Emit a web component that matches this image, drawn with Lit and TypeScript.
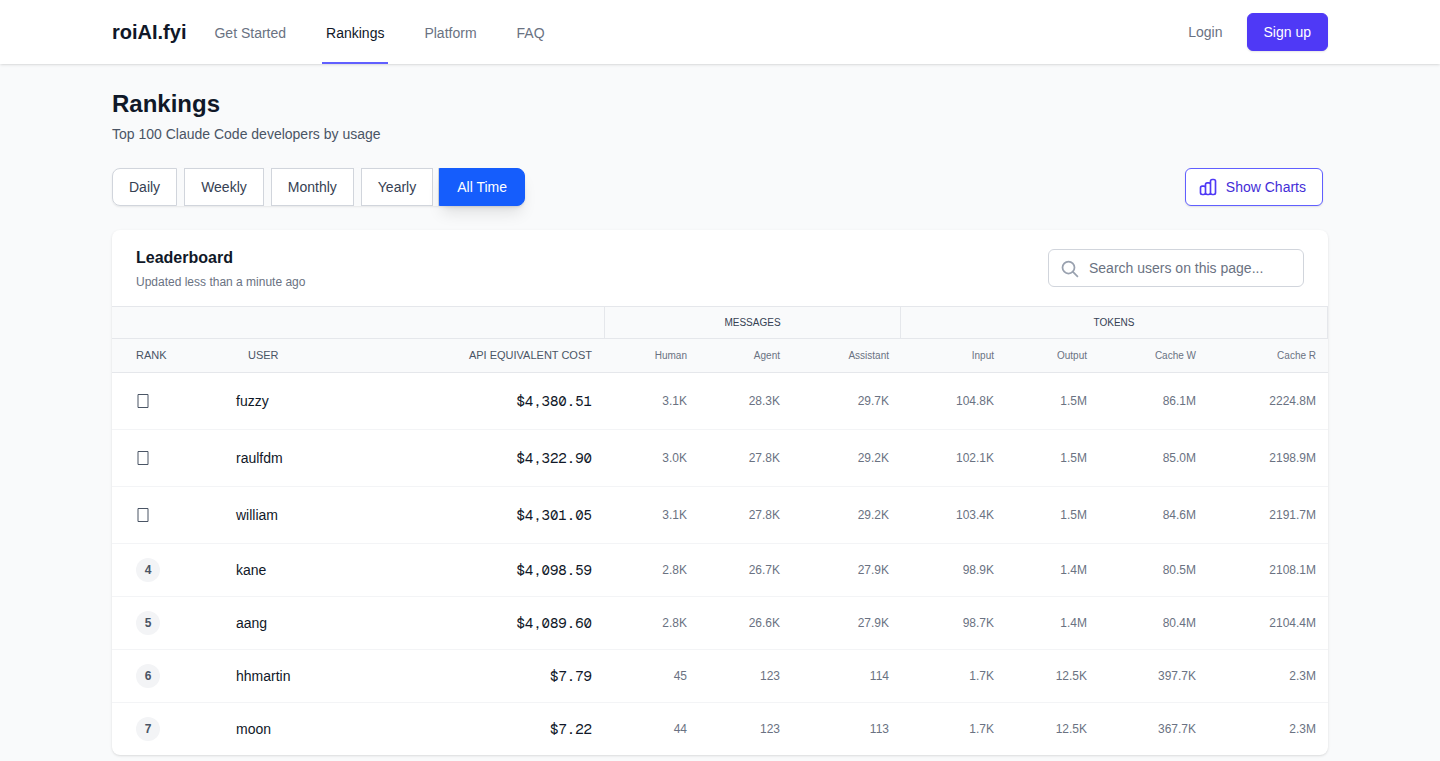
import { LitElement, html, css } from "lit";
import { customElement, state } from "lit/decorators.js";
import { classMap } from "lit/directives/class-map.js";

interface Entry {
  rank: number;
  user: string;
  cost: string;
  usage: string[];
}

const ENTRIES: Entry[] = [
  { rank: 1, user: "fuzzy", cost: "$4,380.51", usage: ["3.1K", "28.3K", "29.7K", "104.8K", "1.5M", "86.1M", "2224.8M"] },
  { rank: 2, user: "raulfdm", cost: "$4,322.90", usage: ["3.0K", "27.8K", "29.2K", "102.1K", "1.5M", "85.0M", "2198.9M"] },
  { rank: 3, user: "william", cost: "$4,301.05", usage: ["3.1K", "27.8K", "29.2K", "103.4K", "1.5M", "84.6M", "2191.7M"] },
  { rank: 4, user: "kane", cost: "$4,098.59", usage: ["2.8K", "26.7K", "27.9K", "98.9K", "1.4M", "80.5M", "2108.1M"] },
  { rank: 5, user: "aang", cost: "$4,089.60", usage: ["2.8K", "26.6K", "27.9K", "98.7K", "1.4M", "80.4M", "2104.4M"] },
  { rank: 6, user: "hhmartin", cost: "$7.79", usage: ["45", "123", "114", "1.7K", "12.5K", "397.7K", "2.3M"] },
  { rank: 7, user: "moon", cost: "$7.22", usage: ["44", "123", "113", "1.7K", "12.5K", "367.7K", "2.3M"] },
];

const PODIUM_SIZE = 3;
const PERIODS = ["Daily", "Weekly", "Monthly", "Yearly", "All Time"];
const USAGE_COLUMNS = ["Human", "Agent", "Assistant", "Input", "Output", "Cache W", "Cache R"];

@customElement("site-header")
export class SiteHeader extends LitElement {
  static styles = css`
    :host {
      display: block;
      background: #fff;
      box-shadow: 0 1px 3px rgba(0, 0, 0, 0.1), 0 1px 2px -1px rgba(0, 0, 0, 0.1);
    }
    .bar {
      box-sizing: border-box;
      max-width: 1280px;
      height: 64px;
      margin: 0 auto;
      padding: 0 32px;
      display: flex;
      align-items: center;
      justify-content: space-between;
    }
    a {
      text-decoration: none;
      color: #6a7282;
      font-size: 14px;
      line-height: 20px;
      font-weight: 500;
    }
    .left,
    nav {
      display: flex;
      align-items: center;
      height: 100%;
    }
    .left {
      gap: 24px;
    }
    nav {
      gap: 32px;
    }
    .brand {
      font-size: 20px;
      line-height: 28px;
      font-weight: 700;
      color: #101828;
    }
    .link {
      box-sizing: border-box;
      height: 100%;
      display: flex;
      align-items: center;
      padding: 4px 4px 0;
      border-bottom: 2px solid transparent;
    }
    .link.current {
      color: #101828;
      border-color: #615fff;
    }
    .account {
      display: flex;
      align-items: center;
      gap: 12px;
    }
    .login {
      padding: 8px 12px;
    }
    .signup {
      padding: 8px 16px;
      border: 1px solid #4f39f6;
      border-radius: 6px;
      background: #4f39f6;
      color: #fff;
      box-shadow: 0 1px 2px rgba(0, 0, 0, 0.1);
    }
  `;

  render() {
    return html`
      <div class="bar">
        <div class="left">
          <a class="brand" href="#">roiAI.fyi</a>
          <nav aria-label="Main">
            <a class="link" href="#start">Get Started</a>
            <a class="link current" href="#rankings" aria-current="page">Rankings</a>
            <a class="link" href="#platform">Platform</a>
            <a class="link" href="#faq">FAQ</a>
          </nav>
        </div>
        <div class="account">
          <a class="login" href="#login">Login</a>
          <a class="signup" href="#signup">Sign up</a>
        </div>
      </div>
    `;
  }
}

@customElement("leader-board")
export class LeaderBoard extends LitElement {
  @state() private query = "";

  static styles = css`
    :host {
      display: block;
      overflow: hidden;
      border-radius: 8px;
      background: #fff;
      box-shadow: 0 1px 3px rgba(0, 0, 0, 0.1), 0 1px 2px -1px rgba(0, 0, 0, 0.1);
    }
    .head {
      display: flex;
      align-items: center;
      justify-content: space-between;
      padding: 16px 24px;
    }
    h2 {
      margin: 0;
      font-size: 16px;
      line-height: 24px;
      font-weight: 600;
      color: #101828;
    }
    .updated {
      margin: 4px 0 0;
      font-size: 12px;
      line-height: 16px;
      color: #6a7282;
    }
    .search {
      box-sizing: border-box;
      display: flex;
      align-items: center;
      gap: 9px;
      width: 256px;
      height: 38px;
      padding: 0 11px;
      border: 1px solid #d1d5dc;
      border-radius: 6px;
      background: #fff;
      color: #99a1af;
    }
    .search:focus-within {
      border-color: #615fff;
    }
    .search svg {
      flex: none;
      width: 20px;
      height: 20px;
    }
    .search input {
      flex: 1;
      min-width: 0;
      padding: 0;
      border: 0;
      outline: 0;
      background: none;
      font: inherit;
      font-size: 14px;
      line-height: 20px;
      color: #101828;
    }
    .search input::placeholder {
      color: #6a7282;
      opacity: 1;
    }
    table {
      width: 100%;
      table-layout: fixed;
      border-collapse: separate;
      border-spacing: 0;
      border-top: 1px solid #e5e7eb;
    }
    .col-rank { width: 112px; }
    .col-cost { width: 148px; }
    .col-human { width: 95px; }
    .col-agent { width: 93px; }
    .col-assistant { width: 109px; }
    .col-input { width: 105px; }
    .col-output { width: 93px; }
    .col-write { width: 109px; }
    .col-read { width: 120px; }
    th,
    td {
      box-sizing: border-box;
      padding: 0 12px;
      text-align: right;
      white-space: nowrap;
    }
    thead th,
    thead td {
      background: #f9fafb;
      border-bottom: 1px solid #e5e7eb;
      font-weight: 500;
      color: #6a7282;
      font-size: 10px;
      line-height: 16px;
    }
    .groups > * {
      height: 32px;
    }
    .groups .group {
      text-align: center;
      color: #364153;
      border-right: 1px solid #e5e7eb;
    }
    .groups .first {
      border-left: 1px solid #e5e7eb;
    }
    .labels th {
      height: 34px;
    }
    .labels .main {
      padding-bottom: 2px;
      font-size: 11px;
      color: #4a5565;
    }
    .labels .start {
      padding-left: 24px;
      text-align: left;
    }
    tbody td,
    tbody th {
      height: 53px;
      border-bottom: 1px solid #f3f4f6;
      font-size: 12px;
      line-height: 16px;
      font-weight: 400;
      color: #6a7282;
    }
    tbody .podium > * {
      height: 57px;
    }
    tbody tr:last-child > * {
      height: 52px;
      border-bottom: 0;
    }
    tbody .rank {
      padding: 0 24px;
      text-align: left;
    }
    tbody .user {
      text-align: left;
      font-size: 14px;
      font-weight: 500;
      color: #101828;
    }
    tbody .cost {
      font-family: "Geist Mono", "Noto Sans Mono", "Liberation Mono", monospace;
      font-size: 14px;
      color: #101828;
    }
    .medal {
      display: block;
      width: 13px;
      height: 14px;
      color: #4a5565;
    }
    .badge {
      display: flex;
      align-items: center;
      justify-content: center;
      width: 24px;
      height: 24px;
      border-radius: 50%;
      background: #f3f4f6;
      color: #4a5565;
      font-weight: 600;
    }
  `;

  private onSearch(event: Event) {
    this.query = (event.target as HTMLInputElement).value.trim().toLowerCase();
  }

  private renderRow(entry: Entry) {
    const podium = entry.rank <= PODIUM_SIZE;
    return html`
      <tr class=${classMap({ podium })}>
        <td class="rank">
          ${podium
            ? html`<svg class="medal" viewBox="0 0 13 14" fill="none" stroke="currentColor"
                role="img" aria-label=${`Rank ${entry.rank}`}>
                <path d="M2 .5h10v13h-10z" />
              </svg>`
            : html`<span class="badge">${entry.rank}</span>`}
        </td>
        <th class="user" scope="row">${entry.user}</th>
        <td class="cost">${entry.cost}</td>
        ${entry.usage.map((value) => html`<td>${value}</td>`)}
      </tr>
    `;
  }

  render() {
    const rows = ENTRIES.filter((entry) => entry.user.includes(this.query));
    return html`
      <div class="head">
        <div>
          <h2>Leaderboard</h2>
          <p class="updated">Updated less than a minute ago</p>
        </div>
        <label class="search">
          <svg viewBox="0 0 20 20" fill="none" stroke="currentColor" stroke-width="1.75" aria-hidden="true">
            <circle cx="8.5" cy="9.5" r="6" />
            <path d="M12.7 13.7l5.2 5.2" />
          </svg>
          <input type="text" aria-label="Search users" placeholder="Search users on this page..." @input=${this.onSearch} />
        </label>
      </div>
      <table>
        <colgroup>
          <col class="col-rank" />
          <col />
          <col class="col-cost" />
          <col class="col-human" />
          <col class="col-agent" />
          <col class="col-assistant" />
          <col class="col-input" />
          <col class="col-output" />
          <col class="col-write" />
          <col class="col-read" />
        </colgroup>
        <thead>
          <tr class="groups">
            <td colspan="3"></td>
            <th class="group first" colspan="3" scope="colgroup">MESSAGES</th>
            <th class="group" colspan="4" scope="colgroup">TOKENS</th>
          </tr>
          <tr class="labels">
            <th class="main start" scope="col">RANK</th>
            <th class="main start" scope="col">USER</th>
            <th class="main" scope="col">API EQUIVALENT COST</th>
            ${USAGE_COLUMNS.map((name) => html`<th scope="col">${name}</th>`)}
          </tr>
        </thead>
        <tbody>
          ${rows.map((entry) => this.renderRow(entry))}
        </tbody>
      </table>
    `;
  }
}

@customElement("app-root")
export class AppRoot extends LitElement {
  @state() private period = "All Time";

  static styles = css`
    :host {
      display: block;
      min-height: 100vh;
      background: #f9fafb;
      color: #101828;
      font-family: "Liberation Sans", Arial, sans-serif;
    }
    main {
      box-sizing: border-box;
      max-width: 1280px;
      margin: 0 auto;
      padding: 24px 32px 0;
    }
    h1 {
      margin: 0;
      font-size: 24px;
      line-height: 32px;
      font-weight: 700;
    }
    .lead {
      margin: 4px 0 24px;
      font-size: 14px;
      line-height: 20px;
      color: #4a5565;
    }
    .toolbar {
      display: flex;
      align-items: center;
      justify-content: space-between;
      margin-bottom: 24px;
      padding-right: 5px;
    }
    .periods {
      display: flex;
      gap: 7px;
      border-radius: 8px;
      box-shadow: 0 1px 2px rgba(0, 0, 0, 0.08);
    }
    button {
      box-sizing: border-box;
      height: 38px;
      padding: 0 16px;
      border: 1px solid #d1d5dc;
      background: #fff;
      font: inherit;
      font-size: 14px;
      line-height: 20px;
      font-weight: 500;
      color: #364153;
      cursor: pointer;
    }
    .periods button:first-child {
      border-radius: 8px 0 0 8px;
    }
    .periods button:last-child {
      border-radius: 0 8px 8px 0;
    }
    .periods .active {
      margin-left: -1px;
      padding: 0 17px;
      border-color: #155dfc;
      background: #155dfc;
      color: #fff;
      box-shadow: 0 10px 15px -3px rgba(0, 0, 0, 0.1), 0 4px 6px -4px rgba(0, 0, 0, 0.1),
        -1px 0 0 #d1d5dc;
    }
    .charts {
      display: flex;
      align-items: center;
      gap: 8px;
      padding-left: 12px;
      border-color: #615fff;
      border-radius: 6px;
      color: #432dd7;
      box-shadow: 0 1px 2px rgba(0, 0, 0, 0.1);
    }
    .charts svg {
      width: 20px;
      height: 20px;
    }
  `;

  render() {
    return html`
      <site-header></site-header>
      <main>
        <h1>Rankings</h1>
        <p class="lead">Top 100 Claude Code developers by usage</p>
        <div class="toolbar">
          <div class="periods" role="group" aria-label="Period">
            ${PERIODS.map(
              (name) => html`<button
                type="button"
                class=${classMap({ active: name === this.period })}
                aria-pressed=${name === this.period ? "true" : "false"}
                @click=${() => (this.period = name)}
              >${name}</button>`
            )}
          </div>
          <button class="charts" type="button">
            <svg viewBox="0 0 24 24" fill="none" stroke="#4f39f6" stroke-width="2"
              stroke-linecap="round" stroke-linejoin="round" aria-hidden="true">
              <path d="M9 19v-6a2 2 0 00-2-2H5a2 2 0 00-2 2v6a2 2 0 002 2h2a2 2 0 002-2zm0 0V9a2 2 0 012-2h2a2 2 0 012 2v10m-6 0a2 2 0 002 2h2a2 2 0 002-2m0 0V5a2 2 0 012-2h2a2 2 0 012 2v14a2 2 0 01-2 2h-2a2 2 0 01-2-2z" />
            </svg>
            Show Charts
          </button>
        </div>
        <leader-board></leader-board>
      </main>
    `;
  }
}
